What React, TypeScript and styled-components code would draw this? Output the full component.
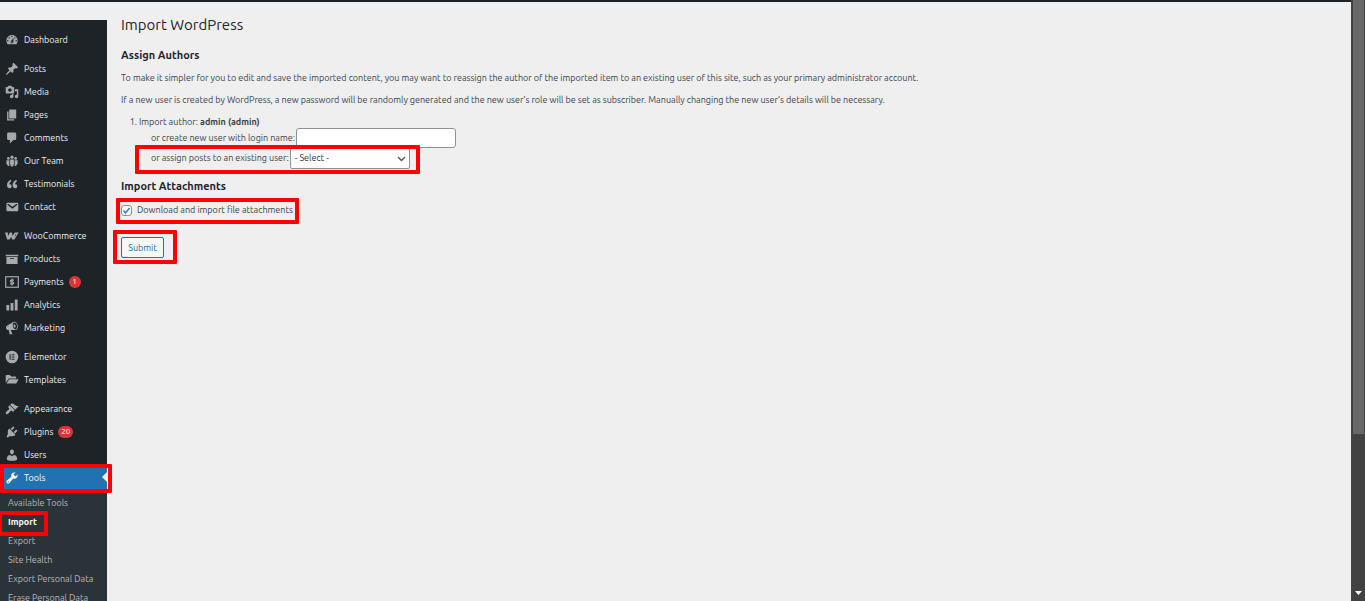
import React from "react";
import styled, { createGlobalStyle, css } from "styled-components";

const GlobalStyle = createGlobalStyle`
  * { box-sizing: border-box; }
  body {
    margin: 0;
    background: #efefef;
    color: #3c434a;
    font-family: Ubuntu, "Open Sans", "Noto Sans", sans-serif;
    font-size: 9px;
    line-height: 14px;
  }
  input, select, button { font-family: inherit; font-size: inherit; }
`;

const callout = css`
  position: relative;
  &::after {
    content: "";
    position: absolute;
    border: 4px solid #fe0000;
    border-radius: 1px;
    pointer-events: none;
  }
`;

const Page = styled.div`
  display: flex;
  flex-direction: column;
  height: 100vh;
  overflow: hidden;
`;

const Columns = styled.div`
  flex: 1;
  min-height: 0;
  display: flex;
`;

const Screen = styled.div`
  flex: 1;
  min-width: 0;
  display: flex;
  flex-direction: column;
`;

const AdminBar = styled.header`
  flex: none;
  height: 2px;
  background: #1d2327;
`;

const Sidebar = styled.nav`
  flex: none;
  width: 107px;
  margin-top: 18px;
  padding-top: 8px;
  background: #1d2327;
`;

const Menu = styled.ul`
  margin: 0;
  padding: 0;
  list-style: none;
`;

const MenuItem = styled.li<{ $first?: boolean }>`
  margin-top: ${(p) => (p.$first ? "6px" : "0")};
`;

const MenuLink = styled.a<{ $current?: boolean }>`
  display: flex;
  align-items: center;
  gap: 5px;
  height: 23px;
  padding-left: 5px;
  color: #f0f0f1;
  text-decoration: none;
  white-space: nowrap;
  svg { flex: none; width: 14px; height: 14px; fill: #a7aaad; }
  ${(p) =>
    p.$current &&
    css`
      ${callout}
      background: #2271b1;
      color: #fff;
      svg { fill: #fff; }
      &::before {
        content: "";
        position: absolute;
        right: 0;
        top: 6px;
        border: 5px solid transparent;
        border-right-color: #efefef;
        border-left-width: 0;
      }
      &::after { inset: -2px -5px -4px 0; }
    `}
`;

const Badge = styled.span`
  min-width: 12px;
  height: 12px;
  padding: 0 3px;
  border-radius: 6px;
  background: #d63638;
  color: #fff;
  font-size: 8px;
  line-height: 12px;
  text-align: center;
`;

const SubMenu = styled.ul`
  margin: 0;
  padding: 5px 0;
  list-style: none;
  background: #2c3338;
`;

const SubLink = styled.a<{ $current?: boolean }>`
  display: block;
  padding-left: 8px;
  line-height: 19px;
  color: #b4b9be;
  text-decoration: none;
  white-space: nowrap;
  ${(p) =>
    p.$current &&
    css`
      ${callout}
      width: 48px;
      color: #fff;
      font-weight: 700;
      &::after { inset: -2px 0 -4px -2px; }
    `}
`;

const Content = styled.main`
  flex: 1;
  min-width: 0;
  padding: 13px 14px;
`;

const Title = styled.h1`
  margin: 0 0 12px;
  color: #1d2327;
  font-size: 15px;
  font-weight: 400;
  line-height: 20px;
`;

const Heading = styled.h2`
  margin: 0;
  color: #1d2327;
  font-size: 11px;
  font-weight: 700;
  line-height: 16px;
`;

const Paragraph = styled.p`
  margin: 8px 0;
`;

const Authors = styled.ol`
  margin: 8px 0 10px;
  padding-left: 18px;
`;

const Assignments = styled.div`
  margin: -1px 0 0 12px;
`;

const Row = styled.div<{ $marked?: boolean }>`
  display: flex;
  align-items: center;
  gap: 1px;
  width: fit-content;
  height: 20px;
  ${(p) =>
    p.$marked &&
    css`
      ${callout}
      &::after { inset: -3px -10px -6px -16px; }
    `}
`;

const TextInput = styled.input`
  width: 160px;
  height: 20px;
  border: 1px solid #8c8f94;
  border-radius: 3px;
  background: #fff;
`;

const SelectWrap = styled.span`
  display: grid;
  align-items: center;
  svg {
    grid-area: 1 / 1;
    justify-self: end;
    width: 9px;
    height: 9px;
    margin-right: 4px;
    pointer-events: none;
  }
`;

const Select = styled.select`
  grid-area: 1 / 1;
  width: 120px;
  height: 21px;
  padding: 0 4px;
  appearance: none;
  border: 1px solid #8c8f94;
  border-radius: 2px;
  background: #fff;
  color: #2c3338;
`;

const CheckLabel = styled.label`
  ${callout}
  display: flex;
  align-items: center;
  gap: 5px;
  width: fit-content;
  margin-top: 9px;
  &::after { inset: -5px -6px -7px -5px; }
`;

const Check = styled.span`
  display: grid;
  place-items: center;
  input {
    grid-area: 1 / 1;
    width: 11px;
    height: 11px;
    margin: 0;
    appearance: none;
    border: 1px solid #8c8f94;
    border-radius: 3px;
    background: #fff;
  }
  svg { grid-area: 1 / 1; width: 9px; height: 9px; pointer-events: none; }
`;

const SubmitArea = styled.div`
  ${callout}
  width: fit-content;
  margin-top: 20px;
  &::after { inset: -7px -13px -6px -8px; }
`;

const SubmitButton = styled.button`
  display: block;
  width: 43px;
  height: 21px;
  padding: 0;
  border: 1px solid #2271b1;
  border-radius: 2px;
  background: #f6f7f7;
  color: #2271b1;
`;

const ScrollTrack = styled.div`
  flex: none;
  display: flex;
  flex-direction: column;
  justify-content: space-between;
  align-items: center;
  width: 14px;
  padding-bottom: 6px;
  background: #424242;
  svg { width: 7px; height: 4px; fill: #fff; }
`;

const ScrollThumb = styled.div`
  width: 11px;
  height: 73%;
  background: #686868;
`;

const icons: Record<string, React.ReactNode> = {
  dashboard: <path fillRule="evenodd" d="M3.76 16h12.48c1.1-1.37 1.76-3.11 1.76-5 0-4.42-3.58-8-8-8s-8 3.58-8 8c0 1.89.66 3.63 1.76 5zM10 4c.55 0 1 .45 1 1s-.45 1-1 1-1-.45-1-1 .45-1 1-1zM6 6c.55 0 1 .45 1 1s-.45 1-1 1-1-.45-1-1 .45-1 1-1zm8 0c.55 0 1 .45 1 1s-.45 1-1 1-1-.45-1-1 .45-1 1-1zm-5.37 5.55L12 7v6c0 1.1-.9 2-2 2s-2-.9-2-2c0-.57.24-1.08.63-1.45zM4 10c.55 0 1 .45 1 1s-.45 1-1 1-1-.45-1-1 .45-1 1-1zm12 0c.55 0 1 .45 1 1s-.45 1-1 1-1-.45-1-1 .45-1 1-1zm-5 3c0-.55-.45-1-1-1s-1 .45-1 1 .45 1 1 1 1-.45 1-1z" />,
  posts: <path d="M10.44 3.02l1.82-1.82 6.36 6.35-1.83 1.82c-1.05-.68-2.48-.57-3.41.36l-.75.75c-.92.93-1.04 2.35-.35 3.41l-1.83 1.82-2.41-2.41-2.8 2.79c-.42.42-3.38 2.71-3.8 2.29s1.86-3.39 2.28-3.81l2.79-2.79L4.1 9.36l1.83-1.82c1.05.69 2.48.57 3.4-.36l.75-.75c.93-.92 1.05-2.35.36-3.41z" />,
  media: <path fillRule="evenodd" d="M13 11V4c0-.55-.45-1-1-1h-1.67L9 1H5L3.67 3H2c-.55 0-1 .45-1 1v7c0 .55.45 1 1 1h10c.55 0 1-.45 1-1zM7 4.5c1.38 0 2.5 1.12 2.5 2.5S8.38 9.5 7 9.5 4.5 8.38 4.5 7 5.62 4.5 7 4.5zM14 6h5v10.5c0 1.38-1.12 2.5-2.5 2.5S14 17.88 14 16.5s1.12-2.5 2.5-2.5c.17 0 .34.02.5.05V9h-3V6zm-4 8.05V13h2v3.5c0 1.38-1.12 2.5-2.5 2.5S7 17.88 7 16.5 8.12 14 9.5 14c.17 0 .34.02.5.05z" />,
  pages: <path d="M6 15V2h10v13H6zm-1 1h8v2H3V5h2v11z" />,
  comments: <path d="M5 2h9c1.1 0 2 .9 2 2v7c0 1.1-.9 2-2 2h-2l-5 5v-5H5c-1.1 0-2-.9-2-2V4c0-1.1.9-2 2-2z" />,
  team: (
    <g>
      <circle cx="10" cy="4.5" r="2.3" />
      <circle cx="4.8" cy="6.3" r="1.9" />
      <circle cx="15.2" cy="6.3" r="1.9" />
      <path d="M7.2 8h5.600v6l-1.300 4H8.500l-1.300-4zM2 9h4.200v8H4.500L2 14zM18 9h-4.200v8h1.700L18 14z" />
    </g>
  ),
  quote: <path d="M9.49 13.22c0-.74-.2-1.38-.61-1.9-.62-.78-1.83-.88-2.53-.72-.29-1.65 1.11-3.75 2.92-4.65L7.88 4c-2.73 1.3-5.42 4.28-4.96 8.05C3.21 14.43 4.59 16 6.54 16c.85 0 1.56-.25 2.12-.75s.83-1.18.83-2.03zm8.05 0c0-.74-.2-1.38-.61-1.9-.63-.78-1.83-.88-2.53-.72-.29-1.65 1.11-3.75 2.92-4.65L15.93 4c-2.73 1.3-5.41 4.28-4.95 8.05.29 2.38 1.66 3.95 3.61 3.95.85 0 1.56-.25 2.12-.75s.83-1.18.83-2.03z" />,
  email: <path fillRule="evenodd" d="M3.87 4h13.25C18.37 4 19 4.59 19 5.79v8.42c0 1.19-.63 1.79-1.88 1.79H3.87c-1.25 0-1.88-.6-1.88-1.79V5.79c0-1.2.63-1.79 1.88-1.79zm6.62 8.6l6.74-5.53c.24-.2.43-.66.13-1.07-.29-.41-.82-.42-1.17-.17l-5.7 3.86L4.8 5.83c-.35-.25-.88-.24-1.17.17-.3.41-.11.87.13 1.07z" />,
  woo: <path fillRule="evenodd" d="M0 5h4l.3 5L7 5h3l.6 5L14 5h5.500L13.500 15H10l-1-4-2.500 4H3L0 5zM15.500 7L13 12l3.500-4z" />,
  products: <path fillRule="evenodd" d="M19 4v2H1V4h18zM2 7h16v10H2V7zm11 3V9H7v1h6z" />,
  payments: (
    <g fill="none" stroke="#a7aaad" strokeWidth="1.7">
      <rect x="1" y="2.500" width="18" height="15" />
      <path d="M13 7.200H9a1.400 1.400 0 0 0 0 2.800h2a1.400 1.400 0 0 1 0 2.800H7M10 5v10" />
    </g>
  ),
  analytics: <path d="M18 18V2h-4v16h4zm-6 0V7H8v11h4zm-6 0v-8H2v8h4z" />,
  marketing: <path fillRule="evenodd" d="M18.15 5.94c.46 1.62.38 3.22-.02 4.48-.42 1.28-1.26 2.18-2.3 2.48-.16.06-.26.06-.4.06-.06.02-.12.02-.18.02-.06.02-.14.02-.22.02h-6.8l2.22 5.5c.02.14-.06.26-.14.34-.08.1-.24.16-.34.16H6.95c-.1 0-.26-.06-.34-.16-.08-.08-.16-.2-.14-.34l-1-5.5H4.25l-.02-.02c-.5.06-1.08-.18-1.54-.62s-.88-1.08-1.06-1.88c-.24-.8-.2-1.56-.02-2.2.18-.62.58-1.08 1.06-1.3l.02-.02 9-5.4c.1-.06.18-.1.24-.16.06-.04.14-.08.24-.12.16-.08.28-.12.5-.18 1.04-.3 2.24.1 3.22.98s1.84 2.24 2.26 3.86zm-2.58 5.98h-.02c.4-.1.74-.34 1.04-.7.58-.7.86-1.76.86-3.04 0-.64-.1-1.3-.28-1.98-.34-1.36-1.02-2.5-1.78-3.24s-1.68-1.1-2.46-.88c-.82.22-1.4.96-1.7 2-.32 1.04-.28 2.36.06 3.72.38 1.36 1 2.5 1.8 3.24.78.74 1.62 1.1 2.48.88zm-2.54-7.08c.22-.04.42-.02.62.04.38.16.76.48 1.02 1s.42 1.2.42 1.78c0 .3-.04.56-.12.8-.18.48-.44.84-.86.94-.34.1-.8-.06-1.14-.4s-.64-.86-.78-1.5c-.18-.62-.12-1.24.02-1.72s.48-.84.82-.94z" />,
  elementor: <path fillRule="evenodd" d="M10 1a9 9 0 1 0 0 18 9 9 0 0 0 0-18zM6.500 6H8v8H6.500zM9.500 6h4v1.500h-4zM9.500 9.250h4v1.500h-4zM9.500 12.500h4V14h-4z" />,
  templates: <path d="M1 14V4.500C1 3.700 1.500 3 2.300 3H7l2 2h5.500c.8 0 1.500.6 1.500 1.500V8H5.500L1 14zM6 9h13.500L16 15H2z" />,
  appearance: <path d="M14.48 11.06L7.41 3.99l1.5-1.5c.5-.56 2.3-.47 3.51.32 1.21.8 1.43 1.28 2.91 2.1 1.18.64 2.45 1.26 4.45.85zm-.71.71L6.7 4.7 4.93 6.47c-.39.39-.39 1.02 0 1.41l1.06 1.06c.39.39.39 1.03 0 1.42-.6.6-1.43 1.11-2.21 1.69-.35.26-.7.53-1.01.84C1.43 14.23.4 16.08 1.4 17.07c.99 1 2.84-.03 4.18-1.36.31-.31.58-.66.85-1.02.57-.78 1.08-1.61 1.69-2.21.39-.39 1.02-.39 1.41 0l1.06 1.06c.39.39 1.02.39 1.41 0z" />,
  plugins: <path d="M13.11 4.36L9.87 7.6 8 5.73l3.24-3.24c.35-.34 1.05-.2 1.56.32.52.51.66 1.21.31 1.55zm-8 1.77l.91-1.12 9.01 9.01-1.19.84c-.71.71-2.63 1.16-3.82 1.16H6.14L4.9 17.26c-.59.59-1.54.59-2.12 0-.59-.58-.59-1.53 0-2.12l1.24-1.24v-3.88c0-1.13.4-3.19 1.09-3.89zm7.26 3.97l3.24-3.24c.34-.35 1.04-.21 1.55.31.52.51.66 1.21.31 1.55l-3.24 3.25z" />,
  users: <path d="M10 9.25c-2.27 0-2.73-3.44-2.73-3.44C7 4.02 7.82 2 9.97 2c2.16 0 2.98 2.02 2.71 3.81 0 0-.41 3.44-2.68 3.44zm0 2.57L12.72 10c2.39 0 4.52 2.33 4.52 4.53v2.49s-3.65 1.13-7.24 1.13c-3.65 0-7.24-1.13-7.24-1.13v-2.49c0-2.25 1.94-4.48 4.47-4.48z" />,
  tools: <path fillRule="evenodd" d="M16.68 9.77c-1.34 1.34-3.3 1.67-4.95.99l-5.41 6.52c-.99.99-2.59.99-3.58 0s-.99-2.59 0-3.57l6.52-5.42c-.68-1.65-.35-3.61.99-4.95 1.28-1.28 3.12-1.62 4.72-1.06l-2.89 2.89 2.82 2.82 2.86-2.87c.53 1.58.18 3.39-1.08 4.65zM3.81 16.21c.4.39 1.04.39 1.43 0 .4-.4.4-1.04 0-1.43-.39-.4-1.03-.4-1.43 0-.39.39-.39 1.03 0 1.43z" />,
};

type Entry = { icon: string; label: string; first?: boolean; count?: number; current?: boolean };

const entries: Entry[] = [
  { icon: "dashboard", label: "Dashboard" },
  { icon: "posts", label: "Posts", first: true },
  { icon: "media", label: "Media" },
  { icon: "pages", label: "Pages" },
  { icon: "comments", label: "Comments" },
  { icon: "team", label: "Our Team" },
  { icon: "quote", label: "Testimonials" },
  { icon: "email", label: "Contact" },
  { icon: "woo", label: "WooCommerce", first: true },
  { icon: "products", label: "Products" },
  { icon: "payments", label: "Payments", count: 1 },
  { icon: "analytics", label: "Analytics" },
  { icon: "marketing", label: "Marketing" },
  { icon: "elementor", label: "Elementor", first: true },
  { icon: "templates", label: "Templates" },
  { icon: "appearance", label: "Appearance", first: true },
  { icon: "plugins", label: "Plugins", count: 20 },
  { icon: "users", label: "Users" },
  { icon: "tools", label: "Tools", current: true },
];

const toolPages = ["Available Tools", "Import", "Export", "Site Health", "Export Personal Data", "Erase Personal Data"];

export default function App() {
  return (
    <>
      <GlobalStyle />
      <Page>
        <Columns>
          <Screen>
            <AdminBar />
            <Columns>
              <Sidebar aria-label="Main menu">
                <Menu>
                  {entries.map((e) => (
                    <MenuItem key={e.label} $first={e.first}>
                      <MenuLink href="#" $current={e.current}>
                        <svg viewBox="0 0 20 20" aria-hidden="true">{icons[e.icon]}</svg>
                        <span>{e.label}</span>
                        {e.count && <Badge>{e.count}</Badge>}
                      </MenuLink>
                      {e.current && (
                        <SubMenu>
                          {toolPages.map((t) => (
                            <li key={t}>
                              <SubLink href="#" $current={t === "Import"}>{t}</SubLink>
                            </li>
                          ))}
                        </SubMenu>
                      )}
                    </MenuItem>
                  ))}
                </Menu>
              </Sidebar>
              <Content>
                <Title>Import WordPress</Title>
                <form onSubmit={(ev) => ev.preventDefault()}>
                  <Heading>Assign Authors</Heading>
                  <Paragraph>
                    To make it simpler for you to edit and save the imported content, you may want to reassign the author of the imported item to an existing user of this site, such as your primary administrator account.
                  </Paragraph>
                  <Paragraph>
                    If a new user is created by WordPress, a new password will be randomly generated and the new user’s role will be set as subscriber. Manually changing the new user’s details will be necessary.
                  </Paragraph>
                  <Authors>
                    <li>
                      Import author: <strong>admin (admin)</strong>
                      <Assignments>
                        <Row>
                          <label htmlFor="login">or create new user with login name:</label>
                          <TextInput id="login" type="text" />
                        </Row>
                        <Row $marked>
                          <label htmlFor="user">or assign posts to an existing user:</label>
                          <SelectWrap>
                            <Select id="user">
                              <option>- Select -</option>
                            </Select>
                            <svg viewBox="0 0 9 9" aria-hidden="true">
                              <path d="M1 3l3.500 3.500L8 3" fill="none" stroke="#50575e" strokeWidth="1.400" />
                            </svg>
                          </SelectWrap>
                        </Row>
                      </Assignments>
                    </li>
                  </Authors>
                  <Heading>Import Attachments</Heading>
                  <CheckLabel>
                    <Check>
                      <input type="checkbox" defaultChecked />
                      <svg viewBox="0 0 9 9" aria-hidden="true">
                        <path d="M1.500 4.500l2 2.500 4-5" fill="none" stroke="#3582c4" strokeWidth="1.600" />
                      </svg>
                    </Check>
                    Download and import file attachments
                  </CheckLabel>
                  <SubmitArea>
                    <SubmitButton type="submit">Submit</SubmitButton>
                  </SubmitArea>
                </form>
              </Content>
            </Columns>
          </Screen>
          <ScrollTrack>
            <ScrollThumb />
            <svg viewBox="0 0 7 4" aria-hidden="true"><path d="M0 0h7L3.500 4z" /></svg>
          </ScrollTrack>
        </Columns>
      </Page>
    </>
  );
}
